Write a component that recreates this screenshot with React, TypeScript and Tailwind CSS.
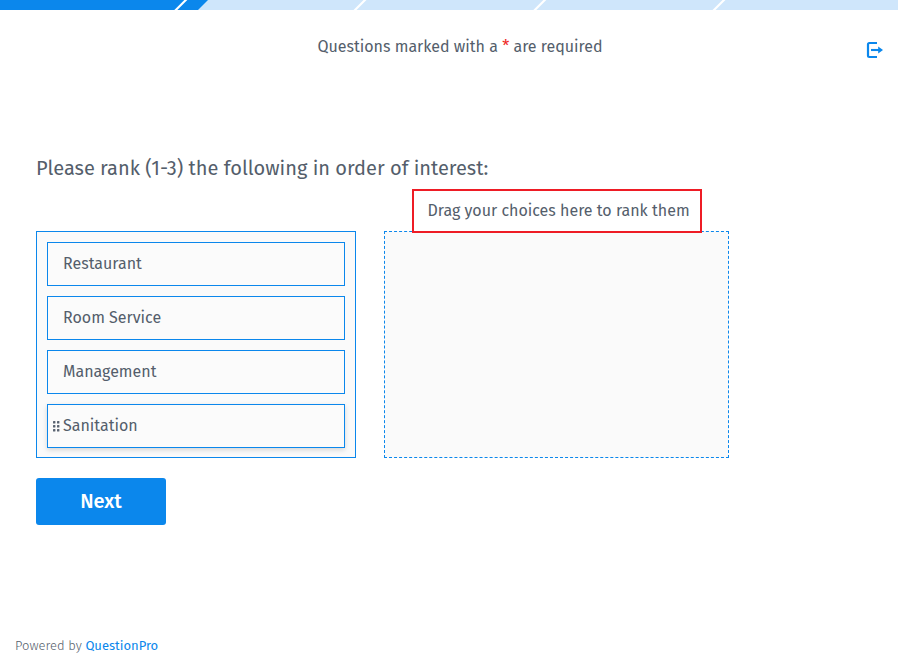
const choices = ["Restaurant", "Room Service", "Management", "Sanitation"];

function ProgressBar() {
  return (
    <svg className="block h-[10px] w-full" viewBox="0 0 898 10">
      <rect width="898" height="10" fill="#cfe6fb" />
      <polygon points="0,0 208,0 198,10 0,10" fill="#0b87ec" />
      {[175.8, 355, 534.8, 714].map((x) => (
        <path key={x} d={`M${x - 1} 11L${x + 11} -1`} stroke="#fff" strokeWidth="2.1" />
      ))}
    </svg>
  );
}

function ExitIcon() {
  return (
    <svg className="h-[18px] w-[18px]" viewBox="0 0 18 18" fill="none">
      <path d="M11 2H3.4Q2 2 2 3.4V14.6Q2 16 3.4 16H11" stroke="#0b87ec" strokeWidth="2.2" />
      <path d="M5 9H13" stroke="#0b87ec" strokeWidth="2.1" />
      <path d="M12.2 5.6L17 9L12.2 12.4Z" fill="#0b87ec" />
    </svg>
  );
}

function DragHandle() {
  return (
    <svg className="absolute top-[16px] left-[4.6px] h-[11px] w-[8px]" viewBox="0 0 8 11" fill="#5a6472">
      {[0, 4, 8].map((y) => (
        <g key={y}>
          <rect x="0" y={y} width="2.4" height="2.4" rx="0.5" />
          <rect x="4" y={y} width="2.4" height="2.4" rx="0.5" />
        </g>
      ))}
    </svg>
  );
}

export default function App() {
  return (
    <div className="flex h-[661px] flex-col overflow-hidden bg-white font-['Fira_Sans','Noto_Sans',sans-serif] text-base text-[#545e6b]">
      <ProgressBar />
      <header className="flex h-[72px] justify-between pr-[14px] pl-[317.4px]">
        <p className="mt-[25px] whitespace-nowrap">
          Questions marked with a <span className="text-[#ee2424]">*</span> are required
        </p>
        <div className="mt-[31px]">
          <ExitIcon />
        </div>
      </header>
      <main className="flex flex-1 flex-col pt-[71px] pl-9">
        <h1 className="text-xl leading-[30px] whitespace-nowrap">
          Please rank (1-3) the following in order of interest:
        </h1>
        <div className="mt-[6px] flex gap-7">
          <ul className="mt-[42px] flex h-[227px] w-[320px] flex-col gap-[10px] border border-[#0b87ec] bg-[#fafafa] p-[10px]">
            {choices.map((choice) => (
              <li
                key={choice}
                className={`relative flex h-11 w-[298px] shrink-0 items-center border border-[#0b87ec] bg-[#fbfbfb] pl-[15px] ${
                  choice === "Sanitation" ? "shadow-[0_2px_5px_rgba(0,0,0,0.15)]" : ""
                }`}
              >
                {choice === "Sanitation" && <DragHandle />}
                <span>{choice}</span>
              </li>
            ))}
          </ul>
          <section className="w-[345px]">
            <p className="relative z-10 ml-7 flex h-11 w-[290px] items-center border-2 border-[#ee1c25] pl-[13.5px] whitespace-nowrap">
              Drag your choices here to rank them
            </p>
            <div className="-mt-[2px] h-[227px] border border-dashed border-[#0b87ec] bg-[#fafafa]" />
          </section>
        </div>
        <button className="mt-5 h-[47px] w-[130px] rounded-[3px] bg-[#0b87ec] pb-[2px] text-xl font-medium text-white">
          Next
        </button>
      </main>
      <footer className="pb-[5px] pl-[15px] text-[13px] leading-[20px] font-light text-[#545e6b]">
        Powered by <span className="font-normal text-[#0b87ec]">QuestionPro</span>
      </footer>
    </div>
  );
}
